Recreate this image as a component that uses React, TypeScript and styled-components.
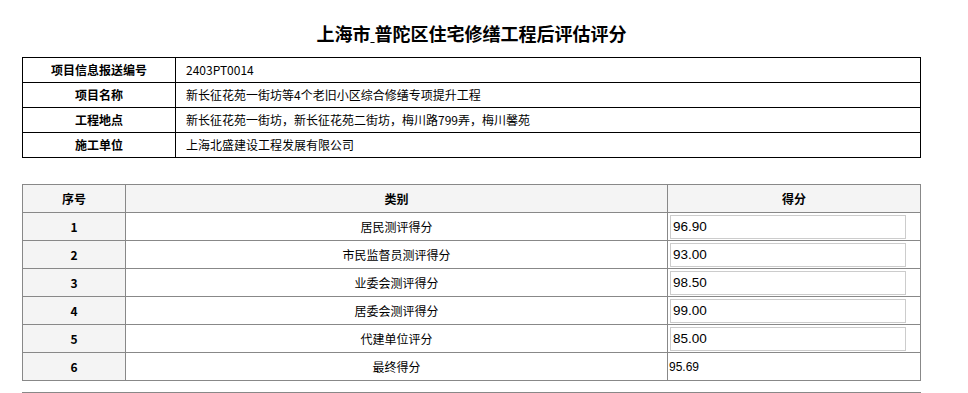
import React from 'react'
import styled, { createGlobalStyle } from 'styled-components'

const GlobalStyle = createGlobalStyle`
  body {
    margin: 0;
    background: #fff;
    color: #000;
    font-family: "Noto Sans CJK SC", "Noto Sans", sans-serif;
    font-size: 12px;
  }
`

const Page = styled.div`
  width: 899px;
  margin-left: 22px;
`

const Title = styled.h1`
  margin: 0;
  height: 57px;
  line-height: 66px;
  text-align: center;
  font-size: 18px;
  font-weight: bold;
`

const Gap = styled.u`
  text-decoration: underline;
`

const InfoTable = styled.table`
  width: 100%;
  border-collapse: collapse;

  td {
    border: 1px solid #000;
    height: 24px;
    padding: 0 10px;
    line-height: 16px;
  }
`

const Label = styled.td`
  width: 132px;
  text-align: center;
  font-weight: bold;
`

const ScoreTable = styled.table`
  width: 100%;
  margin-top: 26px;
  border-collapse: collapse;

  td, th {
    border: 1px solid #888;
    height: 27px;
    padding: 0;
    line-height: 16px;
  }
`

const HeadCell = styled.th<{ $w?: number }>`
  background: #f4f4f4;
  font-weight: bold;
  text-align: center;
  width: ${p => (p.$w ? `${p.$w}px` : 'auto')};
`

const NoCell = styled.td`
  background: #f4f4f4;
  font-weight: bold;
  text-align: center;
`

const KindCell = styled.td`
  text-align: center;
`

const ScoreCell = styled.td`
  padding-left: 1px !important;
`

const ScoreInput = styled.input`
  display: block;
  box-sizing: border-box;
  width: 236px;
  height: 24px;
  margin: 0 0 0 1px;
  padding: 0 2px;
  border: 1px solid #ccc;
  font-family: "Liberation Sans", Arial, sans-serif;
  font-size: 13.5px;
  color: #000;
  outline: none;
`

const Final = styled.span`
  font-family: "Liberation Sans", Arial, sans-serif;
  font-size: 12px;
`

const NextTable = styled.table`
  width: 100%;
  margin-top: 11px;
  border-collapse: collapse;

  td {
    border: 1px solid #888;
    height: 27px;
  }
`

const FirstCol = styled.td`
  width: 242px;
`

const info = [
  ['项目信息报送编号', '2403PT0014'],
  ['项目名称', '新长征花苑一街坊等4个老旧小区综合修缮专项提升工程'],
  ['工程地点', '新长征花苑一街坊，新长征花苑二街坊，梅川路799弄，梅川馨苑'],
  ['施工单位', '上海北盛建设工程发展有限公司'],
]

const scores = [
  { no: 1, kind: '居民测评得分', score: '96.90' },
  { no: 2, kind: '市民监督员测评得分', score: '93.00' },
  { no: 3, kind: '业委会测评得分', score: '98.50' },
  { no: 4, kind: '居委会测评得分', score: '99.00' },
  { no: 5, kind: '代建单位评分', score: '85.00' },
]

export default function App() {
  return (
    <Page>
      <GlobalStyle />
      <Title>
        上海市<Gap> </Gap>普陀区住宅修缮工程后评估评分
      </Title>

      <InfoTable>
        <tbody>
          {info.map(([k, v]) => (
            <tr key={k}>
              <Label>{k}</Label>
              <td>{v}</td>
            </tr>
          ))}
        </tbody>
      </InfoTable>

      <ScoreTable>
        <thead>
          <tr>
            <HeadCell $w={102}>序号</HeadCell>
            <HeadCell>类别</HeadCell>
            <HeadCell $w={252}>得分</HeadCell>
          </tr>
        </thead>
        <tbody>
          {scores.map(s => (
            <tr key={s.no}>
              <NoCell>{s.no}</NoCell>
              <KindCell>{s.kind}</KindCell>
              <ScoreCell>
                <ScoreInput defaultValue={s.score} />
              </ScoreCell>
            </tr>
          ))}
          <tr>
            <NoCell>6</NoCell>
            <KindCell>最终得分</KindCell>
            <ScoreCell>
              <Final>95.69</Final>
            </ScoreCell>
          </tr>
        </tbody>
      </ScoreTable>

      <NextTable>
        <tbody>
          <tr>
            <FirstCol />
            <td />
          </tr>
        </tbody>
      </NextTable>
    </Page>
  )
}
